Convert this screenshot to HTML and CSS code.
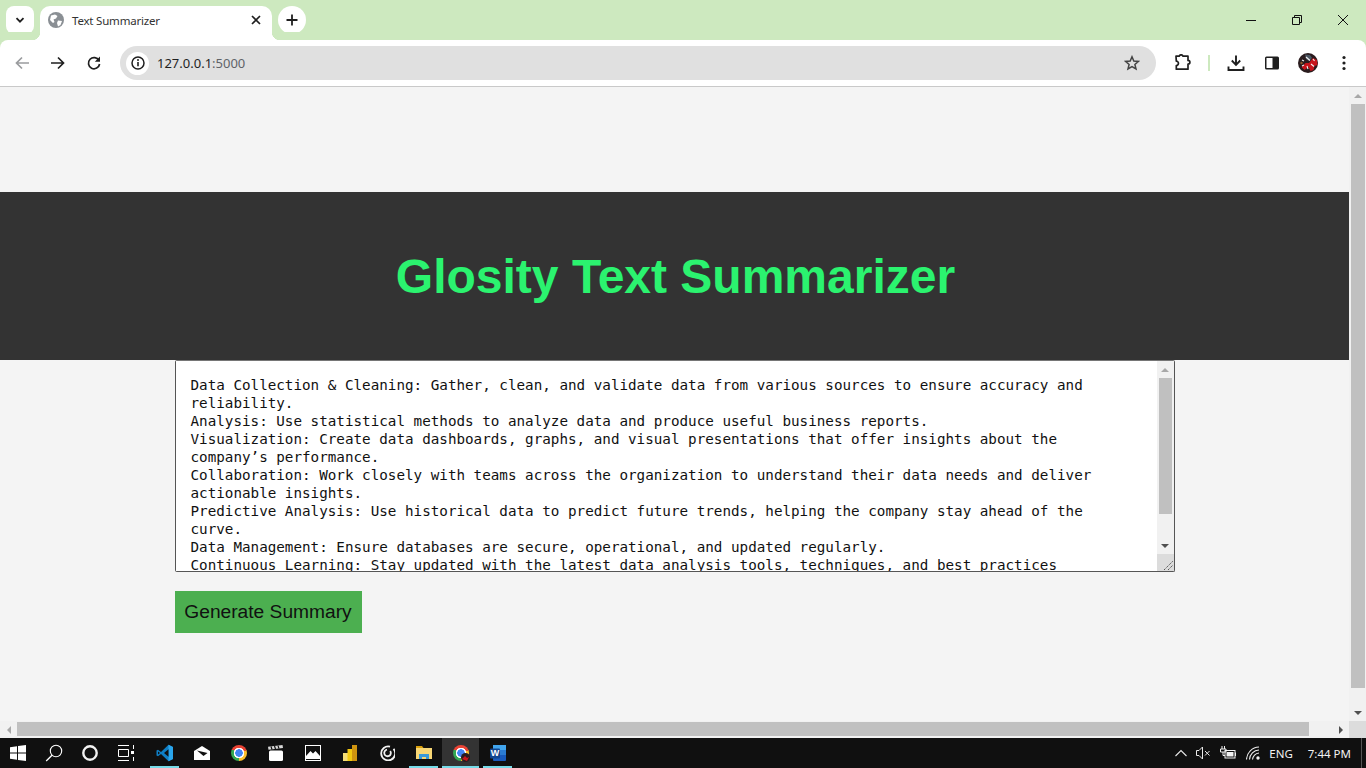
FILE: index.html
```html
<!DOCTYPE html>
<html lang="en">
<head>
  <meta charset="UTF-8">
  <meta name="viewport" content="width=device-width, initial-scale=1.0">
  <title>Text Summarizer</title>
  <link rel="stylesheet" href="styles.css">
</head>
<body>
  <div class="tabstrip">
    <div class="tab-search">
      <svg width="12" height="12" viewBox="0 0 12 12"><path d="M2.5 4.2 6 7.7l3.5-3.5" fill="none" stroke="#1f1f1f" stroke-width="1.8"/></svg>
    </div>
    <div class="tab">
      <svg class="favicon" width="16" height="16" viewBox="0 0 16 16">
        <circle cx="8" cy="8" r="8" fill="#8a8f94"/>
        <path d="M3 3.5 7 2.5 9.5 4 8 6.5 5.5 7.5 6.5 10 5 11 2 8ZM10 8.5 14 9 12.5 13 10 14.5 9 11Z" fill="#fff"/>
      </svg>
      <span class="tab-title">Text Summarizer</span>
      <svg class="tab-close" width="10" height="10" viewBox="0 0 10 10"><path d="M1 1l8 8M9 1 1 9" stroke="#1f1f1f" stroke-width="1.7"/></svg>
    </div>
    <div class="new-tab">
      <svg width="12" height="12" viewBox="0 0 12 12"><path d="M6 .5v11M.5 6h11" stroke="#1f1f1f" stroke-width="1.8"/></svg>
    </div>
    <div class="window-controls">
      <div class="window-btn"><svg width="10" height="10" viewBox="0 0 10 10"><path d="M0 5.5h10" stroke="#111" stroke-width="1"/></svg></div>
      <div class="window-btn"><svg width="10" height="10" viewBox="0 0 10 10"><path d="M.5 2.5h7v7h-7zM2.5 2.5v-2h7v7h-2" fill="none" stroke="#111" stroke-width="1"/></svg></div>
      <div class="window-btn"><svg width="10" height="10" viewBox="0 0 10 10"><path d="M0 0l10 10M10 0 0 10" stroke="#111" stroke-width="1"/></svg></div>
    </div>
  </div>

  <div class="toolbar">
    <div class="tool-btn">
      <svg width="16" height="16" viewBox="0 0 16 16"><path d="M15 8H2.5M8 2.5 2.5 8 8 13.500" fill="none" stroke="#9a9c9e" stroke-width="1.7"/></svg>
    </div>
    <div class="tool-btn">
      <svg width="16" height="16" viewBox="0 0 16 16"><path d="M1 8h12.500M8 2.500 13.500 8 8 13.500" fill="none" stroke="#1f1f1f" stroke-width="1.7"/></svg>
    </div>
    <div class="tool-btn">
      <svg width="16" height="16" viewBox="0 0 16 16"><path d="M13 5.500A5.600 5.600 0 1 0 13.600 9" fill="none" stroke="#1f1f1f" stroke-width="1.7"/><path d="M14 1.500v5.200H8.800z" fill="#1f1f1f"/></svg>
    </div>
    <div class="omnibox">
      <div class="site-info">
        <svg width="14" height="14" viewBox="0 0 14 14"><circle cx="7" cy="7" r="6" fill="none" stroke="#1f1f1f" stroke-width="1.5"/><path d="M7 6v4.200" stroke="#1f1f1f" stroke-width="1.600"/><circle cx="7" cy="4" r="1" fill="#1f1f1f"/></svg>
      </div>
      <span class="url">127.0.0.1<span class="url-port">:5000</span></span>
      <svg class="star" width="16" height="16" viewBox="0 0 16 16"><path d="M8 1.800 9.800 6l4.600.4-3.500 3 1.100 4.500L8 11.500l-4 2.400 1.100-4.500-3.500-3L6.200 6z" fill="none" stroke="#444" stroke-width="1.500"/></svg>
    </div>
    <div class="tool-btn">
      <svg width="18" height="18" viewBox="0 0 18 18"><path d="M2.500 2.500h3.200a2 2 0 0 1 3.800 0h5v4.200a1.900 1.900 0 0 1 0 3.800v5H2.800v-3.700a2 2 0 0 0 0-4.300z" transform="translate(-.5 -.3)" fill="none" stroke="#1f1f1f" stroke-width="1.700" stroke-linejoin="round"/></svg>
    </div>
    <div class="tool-sep"></div>
    <div class="tool-btn">
      <svg width="18" height="18" viewBox="0 0 18 18"><path d="M9 1.500v9M4.800 6.500 9 10.800l4.200-4.300" fill="none" stroke="#1f1f1f" stroke-width="1.900"/><path d="M1.500 12.500v3.500h15v-3.500" fill="none" stroke="#1f1f1f" stroke-width="1.900"/></svg>
    </div>
    <div class="tool-btn">
      <svg width="16" height="16" viewBox="0 0 16 16"><rect x="1" y="1.500" width="14" height="13" rx="1.500" fill="#1f1f1f"/><rect x="2.500" y="3" width="6" height="10" fill="#fff"/></svg>
    </div>
    <div class="tool-btn">
      <svg width="20" height="20" viewBox="0 0 20 20">
        <circle cx="10" cy="10" r="10" fill="#2a1c1e"/>
        <path d="M11 10l4-5 4 2 .5 5-3 1-1 4-3 1-2-4-4 3-3-3 4-4z" fill="#c8151b"/>
        <path d="M7 1.500l5 .5 2 3-3 3-3-2z" fill="#4a5561"/>
        <path d="M8 4l4 3.500M13 11l3 2.500M4 7l2 1M15 6l1.500 2M9 13l1 3M4 13l2-1" stroke="#f2f2f2" stroke-width="1.100"/>
        <circle cx="3.500" cy="10" r="1.200" fill="#8a5a2a"/>
      </svg>
    </div>
    <div class="tool-btn">
      <svg width="4" height="16" viewBox="0 0 4 16"><circle cx="2" cy="2.500" r="1.600" fill="#1f1f1f"/><circle cx="2" cy="8" r="1.600" fill="#1f1f1f"/><circle cx="2" cy="13.500" r="1.600" fill="#1f1f1f"/></svg>
    </div>
  </div>

  <div class="viewport">
    <main class="page">
      <header class="banner">
        <h1>Glosity Text Summarizer</h1>
      </header>
      <form class="summary-form">
        <div class="text-box">
          <textarea class="input-text" readonly>Data Collection &amp; Cleaning: Gather, clean, and validate data from various sources to ensure accuracy and reliability.
Analysis: Use statistical methods to analyze data and produce useful business reports.
Visualization: Create data dashboards, graphs, and visual presentations that offer insights about the company’s performance.
Collaboration: Work closely with teams across the organization to understand their data needs and deliver actionable insights.
Predictive Analysis: Use historical data to predict future trends, helping the company stay ahead of the curve.
Data Management: Ensure databases are secure, operational, and updated regularly.
Continuous Learning: Stay updated with the latest data analysis tools, techniques, and best practices</textarea>
          <div class="box-scroll">
            <div class="scroll-btn"><i class="arrow-up arrow-dim"></i></div>
            <div class="box-track"><div class="box-thumb"></div></div>
            <div class="scroll-btn"><i class="arrow-down"></i></div>
            <div class="box-corner">
              <svg width="17" height="17" viewBox="0 0 17 17"><path d="M7 16 16 7M11 16l5-5" stroke="#555" stroke-width="1" stroke-dasharray="1.400 .8"/></svg>
            </div>
          </div>
        </div>
        <button type="button" class="submit-btn">Generate Summary</button>
      </form>
    </main>
    <div class="page-vscroll">
      <div class="scroll-btn"><i class="arrow-up arrow-dim"></i></div>
      <div class="v-track"><div class="v-thumb"></div></div>
      <div class="scroll-btn"><i class="arrow-down"></i></div>
    </div>
    <div class="page-hscroll">
      <div class="scroll-btn"><i class="arrow-left arrow-dim"></i></div>
      <div class="h-track"><div class="h-thumb"></div></div>
      <div class="scroll-btn"><i class="arrow-right"></i></div>
    </div>
    <div class="scroll-corner"></div>
  </div>

  <footer class="taskbar">
    <div class="task-system">
      <div class="task-item">
        <svg width="16" height="16" viewBox="0 0 16 16"><path d="M0 2.300 7 1.300v6.300H0zM8 1.100 16 0v7.600H8zM0 8.400h7v6.300l-7-1zM8 8.400h8V16l-8-1.100z" fill="#fff"/></svg>
      </div>
      <div class="task-item">
        <svg width="18" height="18" viewBox="0 0 18 18"><circle cx="11" cy="7" r="5.700" fill="none" stroke="#fff" stroke-width="1.100"/><path d="M7 11.200 1.200 17" stroke="#fff" stroke-width="1.300"/></svg>
      </div>
      <div class="task-item">
        <svg width="18" height="18" viewBox="0 0 18 18"><circle cx="9" cy="9" r="6.700" fill="none" stroke="#f2f2f2" stroke-width="2.400"/></svg>
      </div>
      <div class="task-item">
        <svg width="16" height="16" viewBox="0 0 16 16"><path d="M0 .5h11M0 15.500h11M.5 4.500h10v7H.5zM15.500 0v4M15.500 12v4" fill="none" stroke="#fff" stroke-width="1"/><rect x="13" y="6" width="3" height="3" fill="#fff"/></svg>
      </div>
    </div>
    <div class="task-apps">
      <div class="task-app is-open">
        <svg width="18" height="18" viewBox="0 0 18 18"><path d="M12.500.8 17 3v12l-4.500 2.200L5 10l-3 2.300-1.500-.9V6.600L2 5.700 5 8z" fill="#0f7ec4"/><path d="M12.500.8V17.200L17 15V3z" fill="#2aa5ec"/><path d="M12.500 5.300 8 9l4.500 3.700z" fill="#101010"/><path d="M2 7.500 4 9l-2 1.500z" fill="#101010"/></svg>
      </div>
      <div class="task-app">
        <svg width="16" height="14" viewBox="0 0 16 14"><path d="M0 5 8 0l8 5v9H0z" fill="#fff"/><path d="M3 4.500 13.500 7 9.500 10z" fill="#101010"/></svg>
      </div>
      <div class="task-app"><div class="chrome-logo"></div></div>
      <div class="task-app">
        <svg width="16" height="16" viewBox="0 0 16 16"><rect x="1" y="5.500" width="14" height="10.500" rx="1.500" fill="#fff"/><path d="M0 1.800 14.500 0l.5 3L.5 4.800z" fill="#d8d8d8"/><path d="M3 1.500l1 3M6.500 1l1 3M10 .6l1 3" stroke="#101010" stroke-width="1.200"/></svg>
      </div>
      <div class="task-app">
        <svg width="16" height="16" viewBox="0 0 16 16"><rect x=".5" y=".5" width="15" height="15" fill="#101010" stroke="#fff"/><path d="M1 14V11L5.500 6 8 8.500 10.500 6 15 11v3z" fill="#fff"/></svg>
      </div>
      <div class="task-app">
        <svg width="14" height="16" viewBox="0 0 14 16"><rect y="8" width="5" height="8" fill="#f6de75"/><rect x="4.500" y="4" width="5" height="12" fill="#f2c811"/><rect x="9" width="5" height="16" fill="#cf9410"/></svg>
      </div>
      <div class="task-app">
        <svg width="16" height="16" viewBox="0 0 16 16"><path d="M14.500 3.800A7 7 0 1 1 11 1.600" fill="none" stroke="#f2f2f2" stroke-width="1.800"/><path d="M11.200 6A3.300 3.300 0 1 1 8 4.700" fill="none" stroke="#f2f2f2" stroke-width="1.800"/></svg>
      </div>
      <div class="task-app is-open">
        <svg width="16" height="16" viewBox="0 0 16 16"><path d="M0 1h6l1.500 2H0z" fill="#d9a00c"/><rect y="3" width="16" height="11" fill="#f8d775"/><path d="M3 14V9h10v5h-3v-2H6v2z" fill="#3b9ad9"/></svg>
      </div>
      <div class="task-app is-open is-active">
        <div class="chrome-logo"></div>
        <svg class="chrome-badge" width="9" height="9" viewBox="0 0 9 9"><circle cx="4.500" cy="4.500" r="4.500" fill="#2a1c1e"/><path d="M1 6 4 3l2 2 2-1-2 4z" fill="#c8151b"/></svg>
      </div>
      <div class="task-app is-open">
        <svg width="16" height="16" viewBox="0 0 16 16"><rect x="3" y="0" width="13" height="16" rx="1" fill="#185abd"/><rect x="3" y="0" width="13" height="5" fill="#41a5ee"/><rect x="3" y="5" width="13" height="5" fill="#2b7cd3"/><rect y="3.500" width="10" height="10" rx="1" fill="#11458f"/><text x="5" y="11.200" class="word-letter">W</text></svg>
      </div>
    </div>
    <div class="task-tray">
      <svg width="12" height="8" viewBox="0 0 12 8"><path d="M.5 7 6 1.500 11.500 7" fill="none" stroke="#e8e8e8" stroke-width="1.100"/></svg>
      <svg class="tray-sound" width="15" height="14" viewBox="0 0 15 14"><path d="M.5 4.500h2.500L6.500 1v12L3 9.500H.5z" fill="none" stroke="#e8e8e8"/><path d="M9 5l4.500 4.500M13.500 5 9 9.500" stroke="#e8e8e8"/></svg>
      <svg class="tray-battery" width="16" height="14" viewBox="0 0 16 14"><path d="M2 0v3M4.500 0v3M.5 3h5.500v3H.5zM3 6v3.500h2" fill="none" stroke="#f2f2f2"/><rect x="5" y="4.500" width="10" height="7.500" fill="none" stroke="#f2f2f2"/><rect x="6.500" y="6" width="7" height="4.500" fill="#f2f2f2"/><rect x="15" y="6.500" width="1" height="3.500" fill="#f2f2f2"/></svg>
      <svg class="tray-wifi" width="14" height="14" viewBox="0 0 14 14"><path d="M.5 13.500A13 13 0 0 1 13 1M3.500 13.500A10 10 0 0 1 13 4M6.500 13.500A7 7 0 0 1 13 7" fill="none" stroke="#f0f0f0" stroke-width="1.100"/><circle cx="12" cy="12" r="1.700" fill="#f2f2f2"/></svg>
      <span class="tray-lang">ENG</span>
      <span class="tray-time">7:44 PM</span>
      <span class="tray-desktop"></span>
    </div>
  </footer>
</body>
</html>
```

FILE: styles.css
```css
:root {
  --frame: #cde9bf;
  --ink: #1f1f1f;
  --scroll-bg: #f1f1f1;
  --scroll-thumb: #c0c0c0;
  --scroll-corner: #dcdcdc;
}

html, body {
  height: 100%;
}

body {
  margin: 0;
  height: 768px;
  overflow: hidden;
  display: flex;
  flex-direction: column;
  font-family: "Noto Sans", sans-serif;
  background: #f4f4f4;
}

/* tab strip */
.tabstrip {
  height: 40px;
  flex: none;
  display: flex;
  align-items: flex-end;
  background: var(--frame);
}

.tab-search {
  width: 28px;
  height: 28px;
  margin: 0 6px 6px 6px;
  display: flex;
  align-items: center;
  justify-content: center;
  background: #fff;
  border-radius: 8px;
}

.tab {
  position: relative;
  width: 232px;
  height: 34px;
  box-sizing: border-box;
  padding: 0 11px 6px 8px;
  display: flex;
  align-items: center;
  background: #fff;
  border-radius: 10px 10px 0 0;
  color: #333;
}

.tab::before,
.tab::after {
  content: "";
  position: absolute;
  bottom: 0;
  width: 8px;
  height: 8px;
}

.tab::before {
  left: -8px;
  background: radial-gradient(circle at 0 0, transparent 8px, #fff 8.5px);
}

.tab::after {
  right: -8px;
  background: radial-gradient(circle at 100% 0, transparent 8px, #fff 8.5px);
}

.favicon {
  flex: none;
}

.tab-title {
  flex: 1;
  margin-left: 8px;
  font-size: 11.5px;
  letter-spacing: -0.2px;
}

.new-tab {
  width: 28px;
  height: 28px;
  margin: 0 0 6px 6px;
  display: flex;
  align-items: center;
  justify-content: center;
  background: #fff;
  border-radius: 50%;
}

.window-controls {
  margin-left: auto;
  height: 40px;
  display: flex;
}

.window-btn {
  width: 46px;
  display: flex;
  align-items: center;
  justify-content: center;
}

/* address bar row */
.toolbar {
  height: 46px;
  flex: none;
  display: flex;
  align-items: center;
  padding: 0 4px;
  background: #fff;
  border-bottom: 1px solid #c9c9c9;
  border-radius: 8px 8px 0 0;
  box-shadow: 0 -8px 0 var(--frame);
}

.tool-btn {
  width: 36px;
  height: 36px;
  flex: none;
  display: flex;
  align-items: center;
  justify-content: center;
}

.omnibox {
  flex: 1;
  height: 34px;
  margin: 0 9px 0 8px;
  padding: 0 16px 0 6px;
  display: flex;
  align-items: center;
  background: #e0e0e0;
  border-radius: 17px;
}

.site-info {
  width: 23px;
  height: 23px;
  display: flex;
  align-items: center;
  justify-content: center;
  background: #fff;
  border-radius: 50%;
}

.url {
  flex: 1;
  margin-left: 8px;
  font-size: 13px;
  color: var(--ink);
}

.url-port {
  color: #5f6368;
}

.tool-sep {
  width: 2px;
  height: 16px;
  flex: none;
  margin: 0 8px 0 7px;
  background: var(--frame);
}

/* page area with its scrollbars */
.viewport {
  flex: 1;
  min-height: 0;
  display: grid;
  grid-template-columns: 1fr 17px;
  grid-template-rows: 1fr 17px;
}

.page {
  min-width: 0;
  overflow: hidden;
  padding-top: 105px;
}

.banner {
  height: 168px;
  padding-left: 2px;
  display: flex;
  align-items: center;
  justify-content: center;
  background: #333;
}

.banner h1 {
  margin: 0;
  font-family: "Liberation Sans", Arial, sans-serif;
  font-size: 48px;
  font-weight: bold;
  color: #2bf36f;
}

.summary-form {
  width: 1000px;
  margin: 0 auto;
}

.text-box {
  height: 210px;
  display: flex;
  background: #fff;
  border: 1px solid #555;
  border-top-color: #767676;
  border-radius: 2px;
}

.input-text {
  flex: 1;
  min-width: 0;
  box-sizing: border-box;
  height: 100%;
  padding: 15px;
  border: 0;
  outline: 0;
  resize: none;
  overflow: hidden;
  font-family: "DejaVu Sans Mono", "Liberation Mono", monospace;
  font-size: 14.25px;
  line-height: 18px;
  color: #111;
}

.box-scroll {
  width: 17px;
  flex: none;
  display: flex;
  flex-direction: column;
  background: var(--scroll-bg);
}

.box-track {
  flex: 1;
}

.box-thumb {
  height: 136px;
  margin: 0 2px;
  background: var(--scroll-thumb);
}

.box-corner {
  height: 17px;
  background: var(--scroll-corner);
}

.box-corner svg {
  display: block;
}

.scroll-btn {
  width: 17px;
  height: 17px;
  flex: none;
  display: flex;
  align-items: center;
  justify-content: center;
}

.arrow-up,
.arrow-down,
.arrow-left,
.arrow-right {
  width: 0;
  height: 0;
  border: 4px solid transparent;
}

.arrow-up {
  border-top: 0;
  border-bottom-color: #505050;
}

.arrow-down {
  border-bottom: 0;
  border-top-color: #505050;
}

.arrow-left {
  border-left: 0;
  border-right-color: #505050;
}

.arrow-right {
  border-right: 0;
  border-left-color: #505050;
}

.arrow-dim {
  opacity: 0.45;
}

.submit-btn {
  display: block;
  margin-top: 19px;
  width: 187px;
  height: 42px;
  padding: 0;
  border: 0;
  background: #4caf50;
  font-family: "Liberation Sans", Arial, sans-serif;
  font-size: 19.2px;
  color: #111;
}

.page-vscroll {
  display: flex;
  flex-direction: column;
  background: var(--scroll-bg);
}

.v-track {
  flex: 1;
}

.v-thumb {
  height: 584px;
  margin: 0 1px 0 2px;
  background: var(--scroll-thumb);
}

.page-hscroll {
  display: flex;
  background: var(--scroll-bg);
}

.h-track {
  flex: 1;
}

.h-thumb {
  width: 1292px;
  height: 14px;
  margin-top: 1px;
  background: var(--scroll-thumb);
}

.scroll-corner {
  background: var(--scroll-corner);
}

/* windows taskbar */
.taskbar {
  height: 30px;
  flex: none;
  display: flex;
  align-items: stretch;
  background: #101010;
  color: #f2f2f2;
}

.task-system {
  display: flex;
  padding-right: 2px;
}

.task-item {
  width: 36px;
  display: flex;
  align-items: center;
  justify-content: center;
}

.task-apps {
  display: flex;
}

.task-app {
  position: relative;
  width: 37px;
  display: flex;
  align-items: center;
  justify-content: center;
}

.is-open::after {
  content: "";
  position: absolute;
  left: 4px;
  right: 4px;
  bottom: 0;
  height: 2px;
  background: #76dbe8;
}

.is-active {
  background: #333;
}

.is-active::after {
  left: 0;
  right: 0;
}

.chrome-logo {
  width: 16px;
  height: 16px;
  border-radius: 50%;
  background:
    radial-gradient(circle, #4285f4 0 3.5px, #fff 4px 5px, transparent 5.5px),
    conic-gradient(from -65deg, #ea4335 0 135deg, #fbc02d 135deg 245deg, #34a853 245deg);
}

.chrome-badge {
  position: absolute;
  right: 9px;
  bottom: 6px;
}

.word-letter {
  font-family: "Liberation Sans", Arial, sans-serif;
  font-size: 9px;
  font-weight: bold;
  fill: #fff;
  text-anchor: middle;
}

.task-tray {
  margin-left: auto;
  display: flex;
  align-items: center;
  font-size: 11.5px;
}

.tray-sound,
.tray-battery,
.tray-lang {
  margin-left: 9px;
}

.tray-wifi {
  margin-left: 10px;
}

.tray-time {
  margin-left: 15px;
}

.tray-desktop {
  width: 1px;
  height: 30px;
  margin: 0 4px 0 10px;
  background: #555;
}
```
